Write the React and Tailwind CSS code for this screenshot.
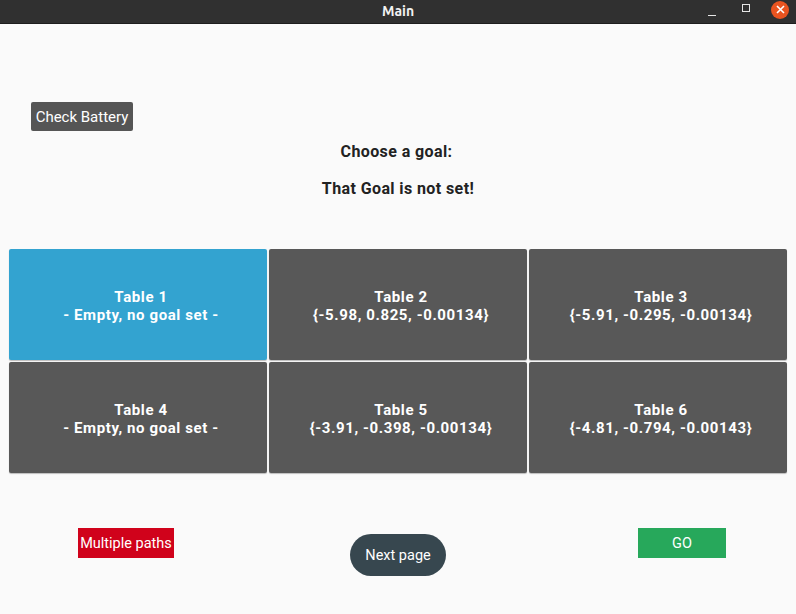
import { useState } from "react";

const tables = [
  { name: "Table 1", goal: "- Empty, no goal set -" },
  { name: "Table 2", goal: "{-5.98, 0.825, -0.00134}" },
  { name: "Table 3", goal: "{-5.91, -0.295, -0.00134}" },
  { name: "Table 4", goal: "- Empty, no goal set -" },
  { name: "Table 5", goal: "{-3.91, -0.398, -0.00134}" },
  { name: "Table 6", goal: "{-4.81, -0.794, -0.00143}" },
];

export default function App() {
  const [selected, setSelected] = useState(0);

  return (
    <div className="w-[796px] h-[614px] flex flex-col bg-[#fafafa] font-['Roboto','Liberation_Sans',sans-serif] overflow-hidden">
      {/* window title bar */}
      <div className="h-[24px] shrink-0 bg-[#303030] border-b border-[#1e1e1e] flex items-center relative">
        <span className="flex-1 text-center text-[14px] font-bold text-[#f2f2f2] font-['Ubuntu','DejaVu_Sans',sans-serif]">Main</span>
        <div className="absolute right-[7px] top-0 h-[23px] flex items-center">
          <div className="w-[8px] h-[1px] bg-[#e6e6e6] mt-[8px]" />
          <div className="ml-[26px] w-[8px] h-[8px] border border-[#e6e6e6] mb-[8px]" />
          <div className="ml-[21px] w-[18px] h-[18px] rounded-full bg-[#e95420] flex items-center justify-center mb-[4px]">
            <svg width="9" height="9" viewBox="0 0 9 9">
              <path d="M1 1L8 8M8 1L1 8" stroke="#fff" strokeWidth="1.6" />
            </svg>
          </div>
        </div>
      </div>

      {/* body */}
      <div className="flex flex-col flex-1">
        <div className="pl-[31px] pt-[78px]">
          <button className="h-[29px] w-[102px] pt-[1px] bg-[#555555] text-white text-[15px] rounded-[2px]">Check Battery</button>
        </div>

        <div className="mt-[11px] pr-[3px] text-center text-[16px] font-bold text-[#222] leading-[20px] tracking-[0.4px]">Choose a goal:</div>
        <div className="mt-[17px] text-center text-[16px] font-bold text-[#222] leading-[20px] tracking-[0.4px]">That Goal is not set!</div>

        <div className="mt-[50px] px-[9px] grid grid-cols-3 gap-[2px]">
          {tables.map((t, i) => (
            <button
              key={t.name}
              onClick={() => setSelected(i)}
              className={
                "h-[111px] rounded-[2px] flex flex-col items-center justify-center pt-[2px] pl-[6px] text-white text-[15px] font-bold leading-[18px] tracking-[0.6px] shadow-[0_1px_1px_rgba(0,0,0,0.25)] " +
                (selected === i ? "bg-[#33a3d0]" : "bg-[#585858]")
              }
            >
              <span>{t.name}</span>
              <span>{t.goal}</span>
            </button>
          ))}
        </div>

        <div className="mt-[55px] flex items-start">
          <button className="ml-[78px] w-[96px] h-[30px] pt-[1px] bg-[#d0021b] text-white text-[14.5px]">Multiple paths</button>
          <button className="ml-[176px] mt-[6px] w-[96px] h-[42px] pt-[1px] rounded-full bg-[#37474f] text-white text-[14.5px]">Next page</button>
          <button className="ml-[192px] w-[88px] h-[30px] pt-[1px] bg-[#27a85b] text-white text-[14.5px]">GO</button>
        </div>
      </div>
    </div>
  );
}
